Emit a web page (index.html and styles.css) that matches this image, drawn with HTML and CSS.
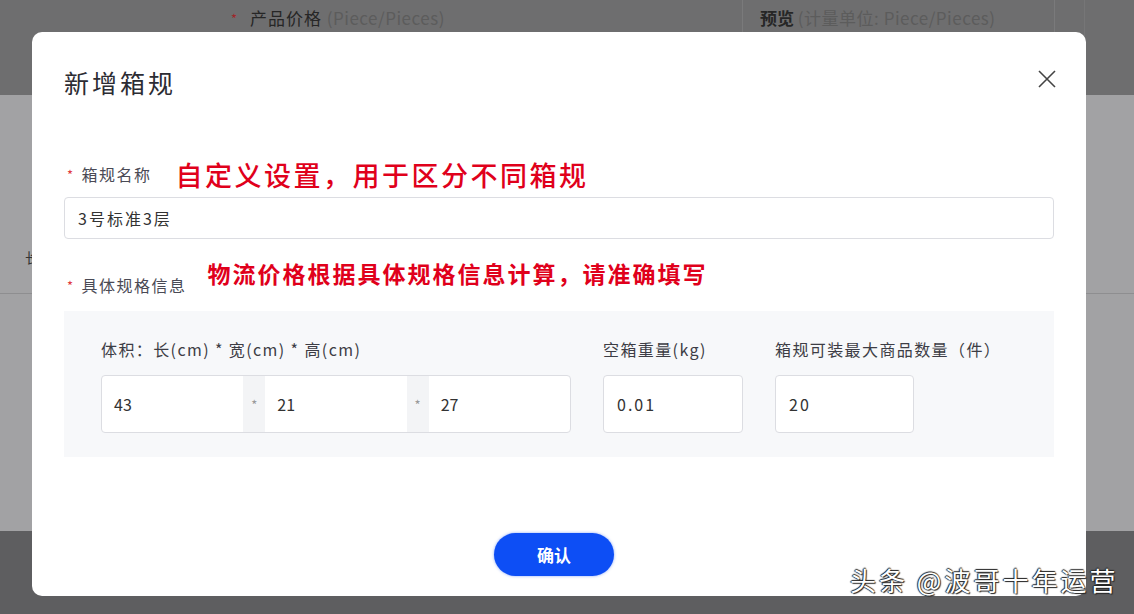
FILE: index.html
```html
<!DOCTYPE html>
<html lang="zh-CN">
<head>
  <meta charset="UTF-8" />
  <title>新增箱规</title>
  <link rel="stylesheet" href="styles.css">
</head>
<body>

<!-- dimmed page behind the dialog -->
<div class="page">
  <div class="band-top">
    <div class="head-cell head-price"><span class="req">*</span> 产品价格 <span class="hint">(Piece/Pieces)</span></div>
    <div class="head-cell head-preview">预览 <span class="hint">(计量单位: Piece/Pieces)</span></div>
    <div class="head-cell head-end"></div>
  </div>
  <div class="band-mid">
    <div class="mid-row"><span class="mid-label">长</span></div>
  </div>
  <div class="band-bottom"></div>
</div>

<!-- dialog -->
<div class="modal">
  <div class="modal-head">
    <h2 class="modal-title">新增箱规</h2>
    <svg class="close" width="20" height="20" viewBox="0 0 20 20">
      <path d="M2 2 L18 18 M18 2 L2 18" stroke="#444" stroke-width="1.6" fill="none"/>
    </svg>
  </div>

  <div class="field">
    <div class="label-row">
      <span class="label"><span class="req">*</span>箱规名称</span>
      <span class="note note-big">自定义设置，用于区分不同箱规</span>
    </div>
    <div class="input wide">3号标准3层</div>
  </div>

  <div class="field">
    <div class="label-row">
      <span class="label label-low"><span class="req">*</span>具体规格信息</span>
      <span class="note note-mid">物流价格根据具体规格信息计算，请准确填写</span>
    </div>
    <div class="spec">
      <div class="spec-col">
        <div class="spec-label">体积：长(cm) * 宽(cm) * 高(cm)</div>
        <div class="dims">
          <div class="dim">43</div>
          <div class="sep">*</div>
          <div class="dim">21</div>
          <div class="sep">*</div>
          <div class="dim">27</div>
        </div>
      </div>
      <div class="spec-col">
        <div class="spec-label">空箱重量(kg)</div>
        <div class="input box">0.01</div>
      </div>
      <div class="spec-col">
        <div class="spec-label">箱规可装最大商品数量（件）</div>
        <div class="input box">20</div>
      </div>
    </div>
  </div>

  <div class="modal-foot">
    <button class="btn-ok">确认</button>
  </div>
</div>

<div class="watermark">头条 @波哥十年运营</div>

</body>
</html>
```

FILE: styles.css
```css
body {
  margin: 0;
  font-family: "Noto Sans CJK SC", "Noto Sans", sans-serif;
  background: #5e5e60;
  overflow: hidden;
}

.page {
  width: 1134px;
  height: 614px;
  display: flex;
  flex-direction: column;
}

.band-top {
  height: 95px;
  background: #6e6e6f;
  display: flex;
  color: #262626;
  font-size: 17px;
}

.head-cell {
  padding-top: 5px;
  box-sizing: border-box;
}

.head-price {
  width: 743px;
  padding-left: 228px;
  border-right: 1px solid #7a7a7b;
  letter-spacing: 1px;
}

.head-preview {
  width: 312px;
  padding-left: 17px;
  border-right: 1px solid #7a7a7b;
  font-weight: 700;
}

.head-end {
  width: 30px;
  border-right: 1px solid #767677;
}

.head-cell .hint {
  color: #5c5c5c;
  font-weight: 400;
  letter-spacing: 0.5px;
}

.head-cell .req {
  color: #a0262a;
}

.band-mid {
  height: 436px;
  background: #a2a2a4;
}

.mid-row {
  height: 198px;
  border-bottom: 1px solid #8e8e90;
  position: relative;
}

.mid-label {
  position: absolute;
  left: 25px;
  top: 152px;
  font-size: 14px;
  color: #333;
}

.band-bottom {
  flex: 1;
  background: #5e5e60;
}

/* dialog */
.modal {
  position: absolute;
  left: 32px;
  top: 32px;
  width: 1054px;
  height: 564px;
  background: #fff;
  border-radius: 10px;
  box-sizing: border-box;
  padding: 0 32px;
}

.modal-head {
  height: 98px;
  display: flex;
  align-items: center;
  justify-content: space-between;
}

.modal-title {
  margin: 0;
  margin-top: 1px;
  font-size: 25px;
  letter-spacing: 3px;
  font-weight: 400;
  color: #2c2c33;
}

.close {
  margin-right: -3px;
  margin-top: -4px;
}

.field {
  margin-top: 28px;
}

.field + .field {
  margin-top: 18px;
}

.label-row {
  display: flex;
  align-items: center;
  height: 32px;
  margin-bottom: 7px;
}

.req {
  color: #e0383e;
  font-size: 13px;
  margin: 0 7px 0 3px;
  position: relative;
  top: -1px;
}

.label {
  font-size: 16px;
  letter-spacing: 1.5px;
  color: #4a4a55;
}

.label-low {
  position: relative;
  top: 12px;
}

.note {
  color: #e0001b;
  font-weight: 700;
}

.note-big {
  font-size: 27px;
  letter-spacing: 2.5px;
  font-weight: 500;
  margin-left: 24px;
}

.note-mid {
  font-size: 23px;
  letter-spacing: 2px;
  margin-left: 21px;
}

.input {
  border: 1px solid #dcdde2;
  border-radius: 4px;
  background: #fff;
  box-sizing: border-box;
  font-size: 16px;
  letter-spacing: 2px;
  color: #333;
  display: flex;
  align-items: center;
  padding-left: 13px;
}

.wide {
  height: 42px;
}

.spec {
  background: #f7f8fa;
  margin-top: 22px;
  height: 146px;
  box-sizing: border-box;
  padding: 26px 0 0 37px;
  display: flex;
  gap: 32px;
}

.spec-label {
  font-size: 16px;
  letter-spacing: 1.4px;
  color: #3d3d45;
  height: 24px;
  margin-bottom: 14px;
  white-space: nowrap;
}

.dims {
  display: flex;
  width: 470px;
  height: 58px;
  border: 1px solid #dcdde2;
  border-radius: 4px;
  background: #fff;
  box-sizing: border-box;
  overflow: hidden;
}

.dim {
  flex: 1;
  display: flex;
  align-items: center;
  padding-left: 12px;
  font-size: 16px;
  color: #333;
}

.sep {
  width: 22px;
  background: #f3f4f6;
  color: #999;
  font-size: 13px;
  display: flex;
  align-items: center;
  justify-content: center;
}

.box {
  width: 140px;
  height: 58px;
}

.spec-col:last-child .box {
  width: 139px;
}

.modal-foot {
  display: flex;
  justify-content: center;
  margin-top: 76px;
  padding-right: 10px;
}

.btn-ok {
  width: 120px;
  height: 43px;
  border: none;
  border-radius: 22px;
  background: #0d4ef5;
  color: #fff;
  font-family: inherit;
  font-size: 17px;
  font-weight: 700;
  box-shadow: 0 0 3px rgba(13, 78, 245, 0.5);
}

.watermark {
  position: absolute;
  left: 850px;
  top: 561px;
  font-size: 26px;
  letter-spacing: 3px;
  color: #fff;
  text-shadow: 1px 1px 1px #222, -1px 0 1px #222, 0 -1px 1px #222;
  white-space: nowrap;
}
```
